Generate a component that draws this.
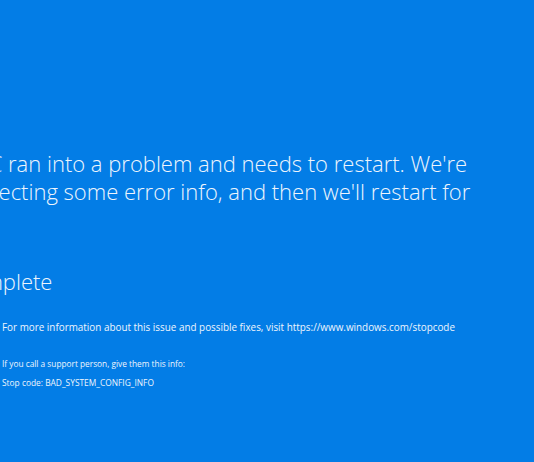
export default function App() {
  return (
    <div className="w-[534px] h-[462px] overflow-hidden bg-[#037de6] text-[#eef5fd] font-['Open_Sans','Noto_Sans',sans-serif]">
      <div className="ml-[-76px] pt-[149px]">
        <p className="w-[600px] text-[22px] leading-[28px] font-light">
          Your PC ran into a problem and needs to restart. We're
          <br />
          just collecting some error info, and then we'll restart for
          <br />
          you.
        </p>
        <p className="mt-[34px] text-[22px] leading-[28px] font-light">0% complete</p>
      </div>
      <div className="mt-[25px] ml-[2px]">
        <p className="text-[9.9px] leading-[14px]">
          For more information about this issue and possible fixes, visit https://www.windows.com/stopcode
        </p>
        <p className="mt-[24px] text-[8.3px] leading-[12px]">If you call a support person, give them this info:</p>
        <p className="mt-[7px] text-[8.4px] leading-[12px]">Stop code: BAD_SYSTEM_CONFIG_INFO</p>
      </div>
    </div>
  );
}
